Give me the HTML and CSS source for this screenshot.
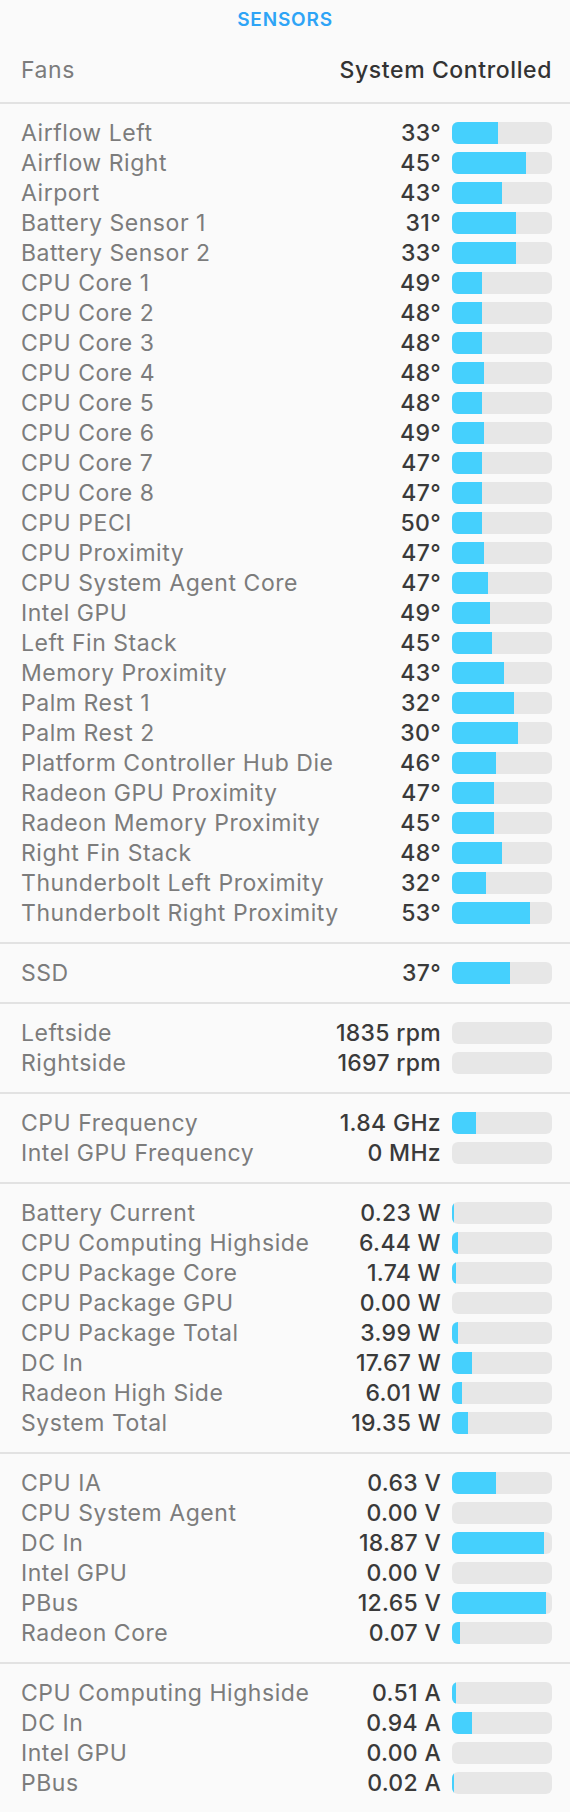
FILE: index.html
```html
<!DOCTYPE html>
<html lang="en">
<head>
    <meta charset="UTF-8">
    <meta name="viewport" content="width=device-width, initial-scale=1.0">
    <title>Sensors</title>
    <link rel="stylesheet" href="styles.css">
</head>
<body>
    <div class="panel">
        <div class="panel-title">SENSORS</div>

        <div class="fans-row">
            <span class="label">Fans</span>
            <span class="fans-mode">System Controlled</span>
        </div>

        <!-- Temperaturas -->
        <div class="group">
            <div class="row"><span class="label">Airflow Left</span><span class="value">33°</span><div class="bar"><div class="fill" style="width: 46px"></div></div></div>
            <div class="row"><span class="label">Airflow Right</span><span class="value">45°</span><div class="bar"><div class="fill" style="width: 74px"></div></div></div>
            <div class="row"><span class="label">Airport</span><span class="value">43°</span><div class="bar"><div class="fill" style="width: 50px"></div></div></div>
            <div class="row"><span class="label">Battery Sensor 1</span><span class="value">31°</span><div class="bar"><div class="fill" style="width: 64px"></div></div></div>
            <div class="row"><span class="label">Battery Sensor 2</span><span class="value">33°</span><div class="bar"><div class="fill" style="width: 64px"></div></div></div>
            <div class="row"><span class="label">CPU Core 1</span><span class="value">49°</span><div class="bar"><div class="fill" style="width: 30px"></div></div></div>
            <div class="row"><span class="label">CPU Core 2</span><span class="value">48°</span><div class="bar"><div class="fill" style="width: 30px"></div></div></div>
            <div class="row"><span class="label">CPU Core 3</span><span class="value">48°</span><div class="bar"><div class="fill" style="width: 30px"></div></div></div>
            <div class="row"><span class="label">CPU Core 4</span><span class="value">48°</span><div class="bar"><div class="fill" style="width: 32px"></div></div></div>
            <div class="row"><span class="label">CPU Core 5</span><span class="value">48°</span><div class="bar"><div class="fill" style="width: 30px"></div></div></div>
            <div class="row"><span class="label">CPU Core 6</span><span class="value">49°</span><div class="bar"><div class="fill" style="width: 32px"></div></div></div>
            <div class="row"><span class="label">CPU Core 7</span><span class="value">47°</span><div class="bar"><div class="fill" style="width: 30px"></div></div></div>
            <div class="row"><span class="label">CPU Core 8</span><span class="value">47°</span><div class="bar"><div class="fill" style="width: 30px"></div></div></div>
            <div class="row"><span class="label">CPU PECI</span><span class="value">50°</span><div class="bar"><div class="fill" style="width: 30px"></div></div></div>
            <div class="row"><span class="label">CPU Proximity</span><span class="value">47°</span><div class="bar"><div class="fill" style="width: 32px"></div></div></div>
            <div class="row"><span class="label">CPU System Agent Core</span><span class="value">47°</span><div class="bar"><div class="fill" style="width: 36px"></div></div></div>
            <div class="row"><span class="label">Intel GPU</span><span class="value">49°</span><div class="bar"><div class="fill" style="width: 38px"></div></div></div>
            <div class="row"><span class="label">Left Fin Stack</span><span class="value">45°</span><div class="bar"><div class="fill" style="width: 40px"></div></div></div>
            <div class="row"><span class="label">Memory Proximity</span><span class="value">43°</span><div class="bar"><div class="fill" style="width: 52px"></div></div></div>
            <div class="row"><span class="label">Palm Rest 1</span><span class="value">32°</span><div class="bar"><div class="fill" style="width: 62px"></div></div></div>
            <div class="row"><span class="label">Palm Rest 2</span><span class="value">30°</span><div class="bar"><div class="fill" style="width: 66px"></div></div></div>
            <div class="row"><span class="label">Platform Controller Hub Die</span><span class="value">46°</span><div class="bar"><div class="fill" style="width: 44px"></div></div></div>
            <div class="row"><span class="label">Radeon GPU Proximity</span><span class="value">47°</span><div class="bar"><div class="fill" style="width: 42px"></div></div></div>
            <div class="row"><span class="label">Radeon Memory Proximity</span><span class="value">45°</span><div class="bar"><div class="fill" style="width: 42px"></div></div></div>
            <div class="row"><span class="label">Right Fin Stack</span><span class="value">48°</span><div class="bar"><div class="fill" style="width: 50px"></div></div></div>
            <div class="row"><span class="label">Thunderbolt Left Proximity</span><span class="value">32°</span><div class="bar"><div class="fill" style="width: 34px"></div></div></div>
            <div class="row"><span class="label">Thunderbolt Right Proximity</span><span class="value">53°</span><div class="bar"><div class="fill" style="width: 78px"></div></div></div>
        </div>

        <!-- Disco -->
        <div class="group">
            <div class="row"><span class="label">SSD</span><span class="value">37°</span><div class="bar"><div class="fill" style="width: 58px"></div></div></div>
        </div>

        <!-- Ventoinhas -->
        <div class="group">
            <div class="row"><span class="label">Leftside</span><span class="value">1835 rpm</span><div class="bar"><div class="fill" style="width: 0"></div></div></div>
            <div class="row"><span class="label">Rightside</span><span class="value">1697 rpm</span><div class="bar"><div class="fill" style="width: 0"></div></div></div>
        </div>

        <!-- Frequências -->
        <div class="group">
            <div class="row"><span class="label">CPU Frequency</span><span class="value">1.84 GHz</span><div class="bar"><div class="fill" style="width: 24px"></div></div></div>
            <div class="row"><span class="label">Intel GPU Frequency</span><span class="value">0 MHz</span><div class="bar"><div class="fill" style="width: 0"></div></div></div>
        </div>

        <!-- Potência -->
        <div class="group">
            <div class="row"><span class="label">Battery Current</span><span class="value">0.23 W</span><div class="bar"><div class="fill" style="width: 2px"></div></div></div>
            <div class="row"><span class="label">CPU Computing Highside</span><span class="value">6.44 W</span><div class="bar"><div class="fill" style="width: 6px"></div></div></div>
            <div class="row"><span class="label">CPU Package Core</span><span class="value">1.74 W</span><div class="bar"><div class="fill" style="width: 4px"></div></div></div>
            <div class="row"><span class="label">CPU Package GPU</span><span class="value">0.00 W</span><div class="bar"><div class="fill" style="width: 0"></div></div></div>
            <div class="row"><span class="label">CPU Package Total</span><span class="value">3.99 W</span><div class="bar"><div class="fill" style="width: 6px"></div></div></div>
            <div class="row"><span class="label">DC In</span><span class="value">17.67 W</span><div class="bar"><div class="fill" style="width: 20px"></div></div></div>
            <div class="row"><span class="label">Radeon High Side</span><span class="value">6.01 W</span><div class="bar"><div class="fill" style="width: 10px"></div></div></div>
            <div class="row"><span class="label">System Total</span><span class="value">19.35 W</span><div class="bar"><div class="fill" style="width: 16px"></div></div></div>
        </div>

        <!-- Tensão -->
        <div class="group">
            <div class="row"><span class="label">CPU IA</span><span class="value">0.63 V</span><div class="bar"><div class="fill" style="width: 44px"></div></div></div>
            <div class="row"><span class="label">CPU System Agent</span><span class="value">0.00 V</span><div class="bar"><div class="fill" style="width: 0"></div></div></div>
            <div class="row"><span class="label">DC In</span><span class="value">18.87 V</span><div class="bar"><div class="fill" style="width: 92px"></div></div></div>
            <div class="row"><span class="label">Intel GPU</span><span class="value">0.00 V</span><div class="bar"><div class="fill" style="width: 0"></div></div></div>
            <div class="row"><span class="label">PBus</span><span class="value">12.65 V</span><div class="bar"><div class="fill" style="width: 94px"></div></div></div>
            <div class="row"><span class="label">Radeon Core</span><span class="value">0.07 V</span><div class="bar"><div class="fill" style="width: 8px"></div></div></div>
        </div>

        <!-- Corrente -->
        <div class="group">
            <div class="row"><span class="label">CPU Computing Highside</span><span class="value">0.51 A</span><div class="bar"><div class="fill" style="width: 4px"></div></div></div>
            <div class="row"><span class="label">DC In</span><span class="value">0.94 A</span><div class="bar"><div class="fill" style="width: 20px"></div></div></div>
            <div class="row"><span class="label">Intel GPU</span><span class="value">0.00 A</span><div class="bar"><div class="fill" style="width: 0"></div></div></div>
            <div class="row"><span class="label">PBus</span><span class="value">0.02 A</span><div class="bar"><div class="fill" style="width: 2px"></div></div></div>
        </div>
    </div>
</body>
</html>
```

FILE: styles.css
```css
body {
    font-family: Inter, "Noto Sans", sans-serif;
    margin: 0;
    background-color: #fafafa;
}
.panel {
    width: 570px;
}
.panel-title {
    height: 40px;
    line-height: 40px;
    text-align: center;
    font-size: 19px;
    font-weight: 600;
    letter-spacing: 0.8px;
    color: #2ea4f6;
}
.fans-row {
    display: flex;
    align-items: center;
    justify-content: space-between;
    height: 30px;
    margin-top: 15px;
    margin-bottom: 17px;
    padding: 0 18px 0 21px;
    font-size: 23px;
}
.fans-mode {
    color: #333;
    font-weight: 500;
    letter-spacing: 0.6px;
}
.group {
    border-top: 2px solid #e2e2e2;
    padding: 14px 18px 14px 21px;
}
.row {
    display: grid;
    grid-template-columns: 1fr auto 100px;
    column-gap: 11px;
    align-items: center;
    height: 30px;
    font-size: 23px;
}
.label {
    color: #7c7c7c;
    letter-spacing: 0.55px;
    white-space: nowrap;
}
.value {
    color: #3a3a3a;
    font-weight: 500;
    letter-spacing: 0.3px;
    text-align: right;
    white-space: nowrap;
}
.bar {
    height: 22px;
    border-radius: 6px;
    background-color: #e7e7e7;
    overflow: hidden;
}
.fill {
    height: 100%;
    background-color: #45d0fd;
}
```
